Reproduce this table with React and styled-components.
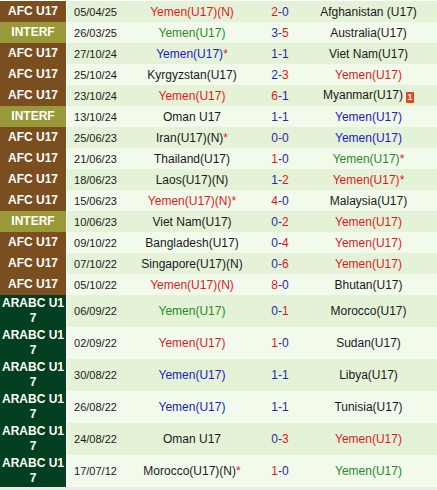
import React from "react";
import styled, { createGlobalStyle } from "styled-components";

const GlobalStyle = createGlobalStyle`
  html, body {
    margin: 0;
    padding: 0;
    background: #ffffff;
  }
  body {
    font-family: "Liberation Sans", Arial, sans-serif;
  }
`;

const leagues = {
  AFC: { label: "AFC U17", bg: "#7a4e1f" },
  INTERF: { label: "INTERF", bg: "#999938" },
  ARABC: { label: "ARABC U17", bg: "#023f1e" },
};

// result: w = Yemen won, d = draw, l = Yemen lost
const matches = [
  ["AFC", "05/04/25", "Yemen(U17)(N)", 2, 0, "Afghanistan (U17)", "h", "w"],
  ["INTERF", "26/03/25", "Yemen(U17)", 3, 5, "Australia(U17)", "h", "l"],
  ["AFC", "27/10/24", "Yemen(U17)*", 1, 1, "Viet Nam(U17)", "h", "d"],
  ["AFC", "25/10/24", "Kyrgyzstan(U17)", 2, 3, "Yemen(U17)", "a", "w"],
  ["AFC", "23/10/24", "Yemen(U17)", 6, 1, "Myanmar(U17)", "h", "w", true],
  ["INTERF", "13/10/24", "Oman U17", 1, 1, "Yemen(U17)", "a", "d"],
  ["AFC", "25/06/23", "Iran(U17)(N)*", 0, 0, "Yemen(U17)", "a", "d"],
  ["AFC", "21/06/23", "Thailand(U17)", 1, 0, "Yemen(U17)*", "a", "l"],
  ["AFC", "18/06/23", "Laos(U17)(N)", 1, 2, "Yemen(U17)*", "a", "w"],
  ["AFC", "15/06/23", "Yemen(U17)(N)*", 4, 0, "Malaysia(U17)", "h", "w"],
  ["INTERF", "10/06/23", "Viet Nam(U17)", 0, 2, "Yemen(U17)", "a", "w"],
  ["AFC", "09/10/22", "Bangladesh(U17)", 0, 4, "Yemen(U17)", "a", "w"],
  ["AFC", "07/10/22", "Singapore(U17)(N)", 0, 6, "Yemen(U17)", "a", "w"],
  ["AFC", "05/10/22", "Yemen(U17)(N)", 8, 0, "Bhutan(U17)", "h", "w"],
  ["ARABC", "06/09/22", "Yemen(U17)", 0, 1, "Morocco(U17)", "h", "l"],
  ["ARABC", "02/09/22", "Yemen(U17)", 1, 0, "Sudan(U17)", "h", "w"],
  ["ARABC", "30/08/22", "Yemen(U17)", 1, 1, "Libya(U17)", "h", "d"],
  ["ARABC", "26/08/22", "Yemen(U17)", 1, 1, "Tunisia(U17)", "h", "d"],
  ["ARABC", "24/08/22", "Oman U17", 0, 3, "Yemen(U17)", "a", "w"],
  ["ARABC", "17/07/12", "Morocco(U17)(N)*", 1, 0, "Yemen(U17)", "a", "l"],
];

const teamColors = { w: "#e3181f", d: "#2020c4", l: "#2a8a26", n: "#1a1a1a" };

const Wrapper = styled.div`
  width: 437px;
  padding-top: 1px;
  border-bottom: 3px solid #ececec;
`;

const Table = styled.table`
  width: 437px;
  border-collapse: collapse;
  table-layout: fixed;
`;

const Row = styled.tr`
  height: ${(p) => (p.$tall ? "32px" : "21px")};
  background: ${(p) => (p.$odd ? "#e4f2d8" : "#f2faec")};
`;

const LeagueCell = styled.td`
  width: 66px;
  padding: 0;
  background: ${(p) => p.$bg};
  border-right: 1px solid #ffffff;
  color: #ffffff;
  font-weight: bold;
  font-size: 12px;
  line-height: 15px;
  text-align: center;
  word-break: break-all;
`;

const DateCell = styled.td`
  width: 57px;
  padding: 0;
  font-size: 11px;
  color: #1a1a1a;
  text-align: center;
`;

const TeamCell = styled.td`
  width: ${(p) => p.$w}px;
  padding: 0;
  font-size: 12px;
  text-align: center;
  white-space: nowrap;
  color: ${(p) => teamColors[p.$tone]};
`;

const ScoreCell = styled.td`
  width: 40px;
  padding: 0;
  font-size: 12px;
  text-align: center;
  color: #1f2aa6;
`;

const Win = styled.span`
  color: #e3181f;
`;

const Star = styled.span`
  color: #e3181f;
`;

const RedCard = styled.span`
  display: inline-block;
  width: 8px;
  height: 11px;
  margin-left: 3px;
  background: #e8461c;
  color: #ffffff;
  font-size: 9px;
  font-weight: bold;
  line-height: 11px;
  vertical-align: -1px;
`;

function Team({ name }) {
  if (name.endsWith("*")) {
    return (
      <>
        {name.slice(0, -1)}
        <Star>*</Star>
      </>
    );
  }
  return name;
}

function Score({ home, away }) {
  return (
    <>
      {home > away ? <Win>{home}</Win> : home}-{away > home ? <Win>{away}</Win> : away}
    </>
  );
}

export default function App() {
  return (
    <Wrapper>
      <GlobalStyle />
      <Table>
        <tbody>
          {matches.map(([lg, date, home, hs, as, away, side, res, card], i) => {
            const league = leagues[lg];
            return (
              <Row key={i} $odd={i % 2 === 0} $tall={lg === "ARABC"}>
                <LeagueCell $bg={league.bg}>{league.label}</LeagueCell>
                <DateCell>{date}</DateCell>
                <TeamCell $w={136} $tone={side === "h" ? res : "n"}>
                  <Team name={home} />
                </TeamCell>
                <ScoreCell>
                  <Score home={hs} away={as} />
                </ScoreCell>
                <TeamCell $w={137} $tone={side === "a" ? res : "n"}>
                  <Team name={away} />
                  {card && <RedCard>1</RedCard>}
                </TeamCell>
              </Row>
            );
          })}
        </tbody>
      </Table>
    </Wrapper>
  );
}
